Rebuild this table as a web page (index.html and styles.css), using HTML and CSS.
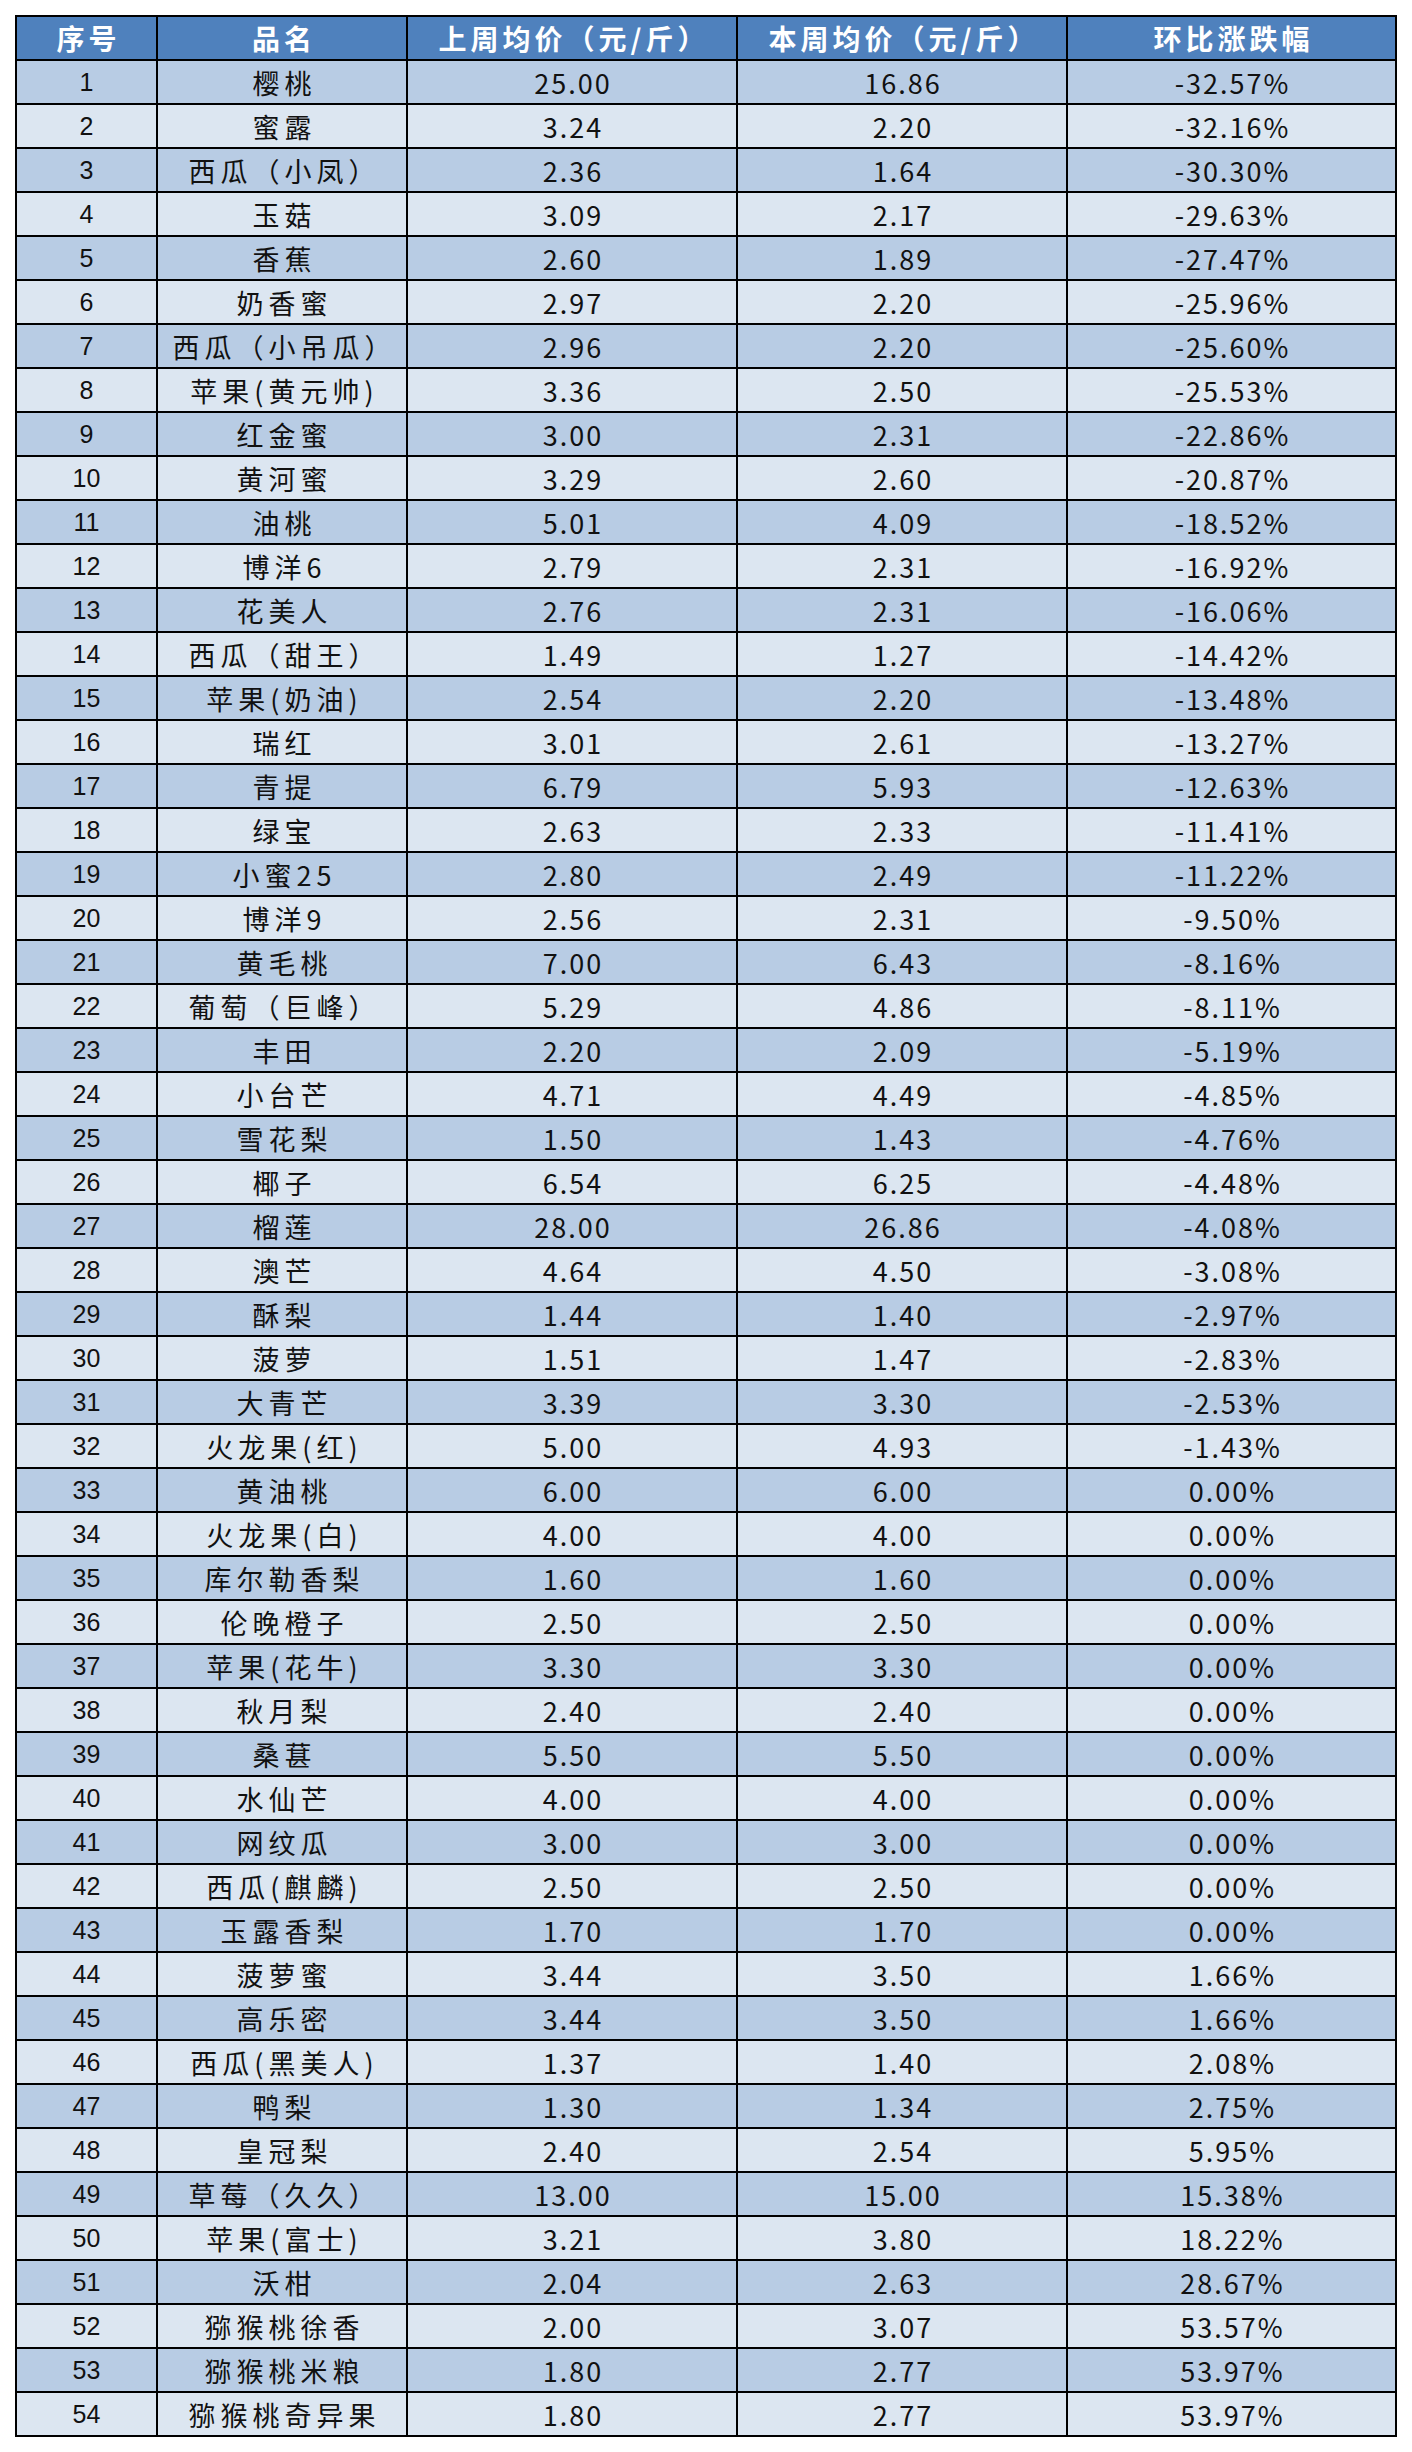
FILE: index.html
```html
<!DOCTYPE html>
<html lang="zh-CN">
<head>
<meta charset="utf-8">
<title>水果价格周环比</title>
<link rel="stylesheet" href="styles.css">
</head>
<body>
<table class="price-table">
<thead>
<tr>
<th class="c-no">序号</th>
<th class="c-name">品名</th>
<th class="c-prev">上周均价（元/斤）</th>
<th class="c-cur">本周均价（元/斤）</th>
<th class="c-chg">环比涨跌幅</th>
</tr>
</thead>
<tbody>
<tr><td class="no">1</td><td class="name">樱桃</td><td class="num">25.00</td><td class="num">16.86</td><td class="num">-32.57%</td></tr>
<tr><td class="no">2</td><td class="name">蜜露</td><td class="num">3.24</td><td class="num">2.20</td><td class="num">-32.16%</td></tr>
<tr><td class="no">3</td><td class="name">西瓜（小凤）</td><td class="num">2.36</td><td class="num">1.64</td><td class="num">-30.30%</td></tr>
<tr><td class="no">4</td><td class="name">玉菇</td><td class="num">3.09</td><td class="num">2.17</td><td class="num">-29.63%</td></tr>
<tr><td class="no">5</td><td class="name">香蕉</td><td class="num">2.60</td><td class="num">1.89</td><td class="num">-27.47%</td></tr>
<tr><td class="no">6</td><td class="name">奶香蜜</td><td class="num">2.97</td><td class="num">2.20</td><td class="num">-25.96%</td></tr>
<tr><td class="no">7</td><td class="name">西瓜（小吊瓜）</td><td class="num">2.96</td><td class="num">2.20</td><td class="num">-25.60%</td></tr>
<tr><td class="no">8</td><td class="name">苹果(黄元帅)</td><td class="num">3.36</td><td class="num">2.50</td><td class="num">-25.53%</td></tr>
<tr><td class="no">9</td><td class="name">红金蜜</td><td class="num">3.00</td><td class="num">2.31</td><td class="num">-22.86%</td></tr>
<tr><td class="no">10</td><td class="name">黄河蜜</td><td class="num">3.29</td><td class="num">2.60</td><td class="num">-20.87%</td></tr>
<tr><td class="no">11</td><td class="name">油桃</td><td class="num">5.01</td><td class="num">4.09</td><td class="num">-18.52%</td></tr>
<tr><td class="no">12</td><td class="name">博洋6</td><td class="num">2.79</td><td class="num">2.31</td><td class="num">-16.92%</td></tr>
<tr><td class="no">13</td><td class="name">花美人</td><td class="num">2.76</td><td class="num">2.31</td><td class="num">-16.06%</td></tr>
<tr><td class="no">14</td><td class="name">西瓜（甜王）</td><td class="num">1.49</td><td class="num">1.27</td><td class="num">-14.42%</td></tr>
<tr><td class="no">15</td><td class="name">苹果(奶油)</td><td class="num">2.54</td><td class="num">2.20</td><td class="num">-13.48%</td></tr>
<tr><td class="no">16</td><td class="name">瑞红</td><td class="num">3.01</td><td class="num">2.61</td><td class="num">-13.27%</td></tr>
<tr><td class="no">17</td><td class="name">青提</td><td class="num">6.79</td><td class="num">5.93</td><td class="num">-12.63%</td></tr>
<tr><td class="no">18</td><td class="name">绿宝</td><td class="num">2.63</td><td class="num">2.33</td><td class="num">-11.41%</td></tr>
<tr><td class="no">19</td><td class="name">小蜜25</td><td class="num">2.80</td><td class="num">2.49</td><td class="num">-11.22%</td></tr>
<tr><td class="no">20</td><td class="name">博洋9</td><td class="num">2.56</td><td class="num">2.31</td><td class="num">-9.50%</td></tr>
<tr><td class="no">21</td><td class="name">黄毛桃</td><td class="num">7.00</td><td class="num">6.43</td><td class="num">-8.16%</td></tr>
<tr><td class="no">22</td><td class="name">葡萄（巨峰）</td><td class="num">5.29</td><td class="num">4.86</td><td class="num">-8.11%</td></tr>
<tr><td class="no">23</td><td class="name">丰田</td><td class="num">2.20</td><td class="num">2.09</td><td class="num">-5.19%</td></tr>
<tr><td class="no">24</td><td class="name">小台芒</td><td class="num">4.71</td><td class="num">4.49</td><td class="num">-4.85%</td></tr>
<tr><td class="no">25</td><td class="name">雪花梨</td><td class="num">1.50</td><td class="num">1.43</td><td class="num">-4.76%</td></tr>
<tr><td class="no">26</td><td class="name">椰子</td><td class="num">6.54</td><td class="num">6.25</td><td class="num">-4.48%</td></tr>
<tr><td class="no">27</td><td class="name">榴莲</td><td class="num">28.00</td><td class="num">26.86</td><td class="num">-4.08%</td></tr>
<tr><td class="no">28</td><td class="name">澳芒</td><td class="num">4.64</td><td class="num">4.50</td><td class="num">-3.08%</td></tr>
<tr><td class="no">29</td><td class="name">酥梨</td><td class="num">1.44</td><td class="num">1.40</td><td class="num">-2.97%</td></tr>
<tr><td class="no">30</td><td class="name">菠萝</td><td class="num">1.51</td><td class="num">1.47</td><td class="num">-2.83%</td></tr>
<tr><td class="no">31</td><td class="name">大青芒</td><td class="num">3.39</td><td class="num">3.30</td><td class="num">-2.53%</td></tr>
<tr><td class="no">32</td><td class="name">火龙果(红)</td><td class="num">5.00</td><td class="num">4.93</td><td class="num">-1.43%</td></tr>
<tr><td class="no">33</td><td class="name">黄油桃</td><td class="num">6.00</td><td class="num">6.00</td><td class="num">0.00%</td></tr>
<tr><td class="no">34</td><td class="name">火龙果(白)</td><td class="num">4.00</td><td class="num">4.00</td><td class="num">0.00%</td></tr>
<tr><td class="no">35</td><td class="name">库尔勒香梨</td><td class="num">1.60</td><td class="num">1.60</td><td class="num">0.00%</td></tr>
<tr><td class="no">36</td><td class="name">伦晚橙子</td><td class="num">2.50</td><td class="num">2.50</td><td class="num">0.00%</td></tr>
<tr><td class="no">37</td><td class="name">苹果(花牛)</td><td class="num">3.30</td><td class="num">3.30</td><td class="num">0.00%</td></tr>
<tr><td class="no">38</td><td class="name">秋月梨</td><td class="num">2.40</td><td class="num">2.40</td><td class="num">0.00%</td></tr>
<tr><td class="no">39</td><td class="name">桑葚</td><td class="num">5.50</td><td class="num">5.50</td><td class="num">0.00%</td></tr>
<tr><td class="no">40</td><td class="name">水仙芒</td><td class="num">4.00</td><td class="num">4.00</td><td class="num">0.00%</td></tr>
<tr><td class="no">41</td><td class="name">网纹瓜</td><td class="num">3.00</td><td class="num">3.00</td><td class="num">0.00%</td></tr>
<tr><td class="no">42</td><td class="name">西瓜(麒麟)</td><td class="num">2.50</td><td class="num">2.50</td><td class="num">0.00%</td></tr>
<tr><td class="no">43</td><td class="name">玉露香梨</td><td class="num">1.70</td><td class="num">1.70</td><td class="num">0.00%</td></tr>
<tr><td class="no">44</td><td class="name">菠萝蜜</td><td class="num">3.44</td><td class="num">3.50</td><td class="num">1.66%</td></tr>
<tr><td class="no">45</td><td class="name">高乐密</td><td class="num">3.44</td><td class="num">3.50</td><td class="num">1.66%</td></tr>
<tr><td class="no">46</td><td class="name">西瓜(黑美人)</td><td class="num">1.37</td><td class="num">1.40</td><td class="num">2.08%</td></tr>
<tr><td class="no">47</td><td class="name">鸭梨</td><td class="num">1.30</td><td class="num">1.34</td><td class="num">2.75%</td></tr>
<tr><td class="no">48</td><td class="name">皇冠梨</td><td class="num">2.40</td><td class="num">2.54</td><td class="num">5.95%</td></tr>
<tr><td class="no">49</td><td class="name">草莓（久久）</td><td class="num">13.00</td><td class="num">15.00</td><td class="num">15.38%</td></tr>
<tr><td class="no">50</td><td class="name">苹果(富士)</td><td class="num">3.21</td><td class="num">3.80</td><td class="num">18.22%</td></tr>
<tr><td class="no">51</td><td class="name">沃柑</td><td class="num">2.04</td><td class="num">2.63</td><td class="num">28.67%</td></tr>
<tr><td class="no">52</td><td class="name">猕猴桃徐香</td><td class="num">2.00</td><td class="num">3.07</td><td class="num">53.57%</td></tr>
<tr><td class="no">53</td><td class="name">猕猴桃米粮</td><td class="num">1.80</td><td class="num">2.77</td><td class="num">53.97%</td></tr>
<tr><td class="no">54</td><td class="name">猕猴桃奇异果</td><td class="num">1.80</td><td class="num">2.77</td><td class="num">53.97%</td></tr>
</tbody>
</table>
</body>
</html>
```
FILE: styles.css
```css
html, body {
  margin: 0;
  padding: 0;
  background: #ffffff;
}

body {
  padding: 15px 0 0 15px;
  font-family: "Noto Sans CJK SC", "Noto Sans", sans-serif;
}

.price-table {
  border-collapse: separate;
  border-spacing: 0;
  table-layout: fixed;
  width: 1382px;
  border-left: 2px solid #000;
  border-top: 2px solid #000;
}

.price-table th,
.price-table td {
  box-sizing: border-box;
  height: 44px;
  padding: 0;
  border-right: 2px solid #000;
  border-bottom: 2px solid #000;
  text-align: center;
  vertical-align: middle;
  line-height: 1;
  white-space: nowrap;
  color: #111;
}

.c-no { width: 141px; }
.c-name { width: 250px; }
.c-prev { width: 330px; }
.c-cur { width: 330px; }
.c-chg { width: 329px; }

.price-table th {
  background: #4f81bd;
  color: #ffffff;
  font-family: "Noto Sans CJK SC", sans-serif;
  font-weight: 700;
  font-size: 28px;
  letter-spacing: 4px;
  text-indent: 4px;
}

.price-table tbody tr:nth-child(odd) td {
  background: #b8cce4;
}

.price-table tbody tr:nth-child(even) td {
  background: #dce6f1;
}

.no {
  font-family: "Liberation Sans", Arial, sans-serif;
  font-size: 25px;
}

.name {
  font-family: "Noto Sans CJK SC", sans-serif;
  font-size: 27px;
  letter-spacing: 5px;
  text-indent: 5px;
}

.num {
  font-family: "Noto Sans CJK SC", sans-serif;
  font-size: 27px;
  letter-spacing: 2px;
  text-indent: 2px;
}
```
